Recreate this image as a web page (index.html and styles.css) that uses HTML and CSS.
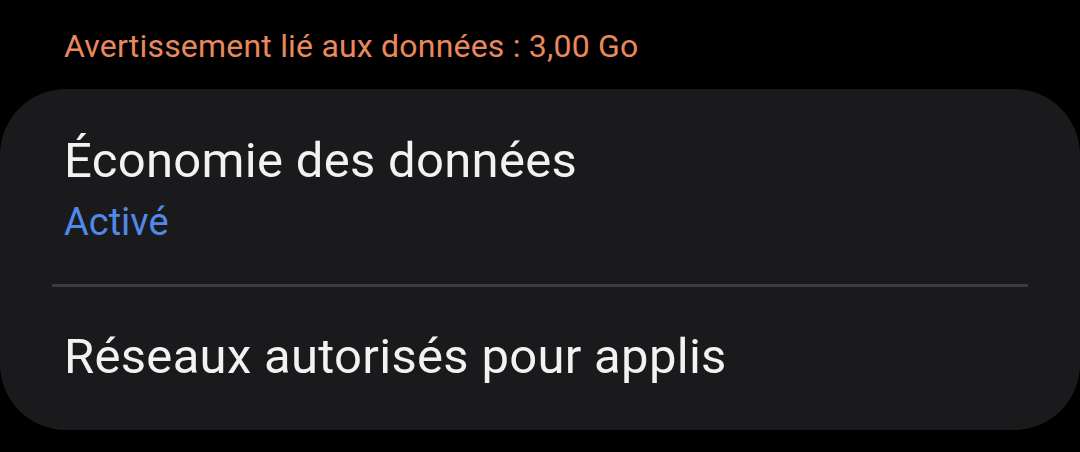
FILE: index.html
```html
<!DOCTYPE html>
<html lang="fr">
<head>
<meta charset="utf-8">
<link rel="stylesheet" href="styles.css">
</head>
<body>
<div class="warning">Avertissement lié aux données : 3,00 Go</div>
<div class="card">
  <div class="row row-first">
    <div class="title">Économie des données</div>
    <div class="sub">Activé</div>
  </div>
  <div class="divider"></div>
  <div class="row row-second">
    <div class="title">Réseaux autorisés pour applis</div>
  </div>
</div>
</body>
</html>
```
FILE: styles.css
```css
html, body {
  margin: 0;
  padding: 0;
  background: #000;
  width: 1080px;
  height: 452px;
  overflow: hidden;
  font-family: Roboto, "Noto Sans", sans-serif;
}
.warning {
  height: 89px;
  box-sizing: border-box;
  padding: 26px 0 0 64px;
  color: #e8885c;
  font-size: 32px;
  letter-spacing: 0.2px;
  line-height: 40px;
}
.card {
  background: #1a1a1c;
  border-radius: 66px;
  height: 341px;
  display: flex;
  flex-direction: column;
}
.row {
  display: flex;
  flex-direction: column;
  padding: 0 64px;
  box-sizing: border-box;
}
.row-first {
  height: 195px;
  padding-top: 42px;
  gap: 8px;
}
.row-second {
  flex: 1;
  padding-top: 40px;
}
.title {
  color: #f2f2f2;
  font-size: 49px;
  letter-spacing: 0.3px;
  line-height: 60px;
}
.sub {
  color: #5089ea;
  font-size: 38px;
  line-height: 46px;
}
.divider {
  height: 3px;
  background: #3c3c3e;
  margin: 0 52px;
}
```
